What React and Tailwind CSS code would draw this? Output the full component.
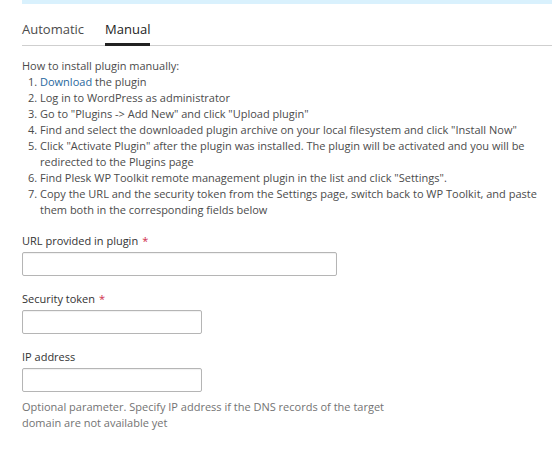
const steps = [
  <>
    <a href="#" className="text-[#28689e]">Download</a> the plugin
  </>,
  "Log in to WordPress as administrator",
  'Go to "Plugins -> Add New" and click "Upload plugin"',
  'Find and select the downloaded plugin archive on your local filesystem and click "Install Now"',
  'Click "Activate Plugin" after the plugin was installed. The plugin will be activated and you will be redirected to the Plugins page',
  'Find Plesk WP Toolkit remote management plugin in the list and click "Settings".',
  "Copy the URL and the security token from the Settings page, switch back to WP Toolkit, and paste them both in the corresponding fields below",
];

const Field = ({ label, required, width, hint }) => (
  <div className="mb-[15px]">
    <label className="block text-[11px] leading-4 text-[#333] mb-[3px]">
      {label}
      {required && <span className="ml-[4px] text-[#d02d4b]">*</span>}
    </label>
    <input
      type="text"
      className={`block h-6 border border-[#b5b5b5] rounded-[2px] bg-white shadow-[inset_0_1px_1px_rgba(0,0,0,0.06)] outline-none ${width}`}
    />
    {hint && (
      <p className="mt-[7px] text-[11px] leading-4 text-[#737373] w-[370px]">{hint}</p>
    )}
  </div>
);

export default function App() {
  return (
    <div className="w-[552px] h-[461px] bg-white overflow-hidden pl-[22px] font-['Open_Sans',sans-serif]">
      <div className="h-1 bg-[#d9f1fd]" />

      <div className="mt-[15px] flex border-b border-[#cfcfcf] text-[13px] leading-5">
        <button className="pb-[6px] mr-[21px] text-[#4b4b4b]">Automatic</button>
        <button className="relative pb-[6px] text-[#222]">
          Manual
          <span className="absolute left-0 right-0 -bottom-px h-[3px] bg-[#222]" />
        </button>
      </div>

      <div className="mt-[12px] text-[11px] leading-4 text-[#4b4b4b]">
        <p>How to install plugin manually:</p>
        <ol className="list-decimal pl-[18px]">
          {steps.map((s, i) => (
            <li key={i}>{s}</li>
          ))}
        </ol>
      </div>

      <div className="mt-[15px]">
        <Field label="URL provided in plugin" required width="w-[315px]" />
        <Field label="Security token" required width="w-[180px]" />
        <Field
          label="IP address"
          width="w-[180px]"
          hint="Optional parameter. Specify IP address if the DNS records of the target domain are not available yet"
        />
      </div>
    </div>
  );
}
